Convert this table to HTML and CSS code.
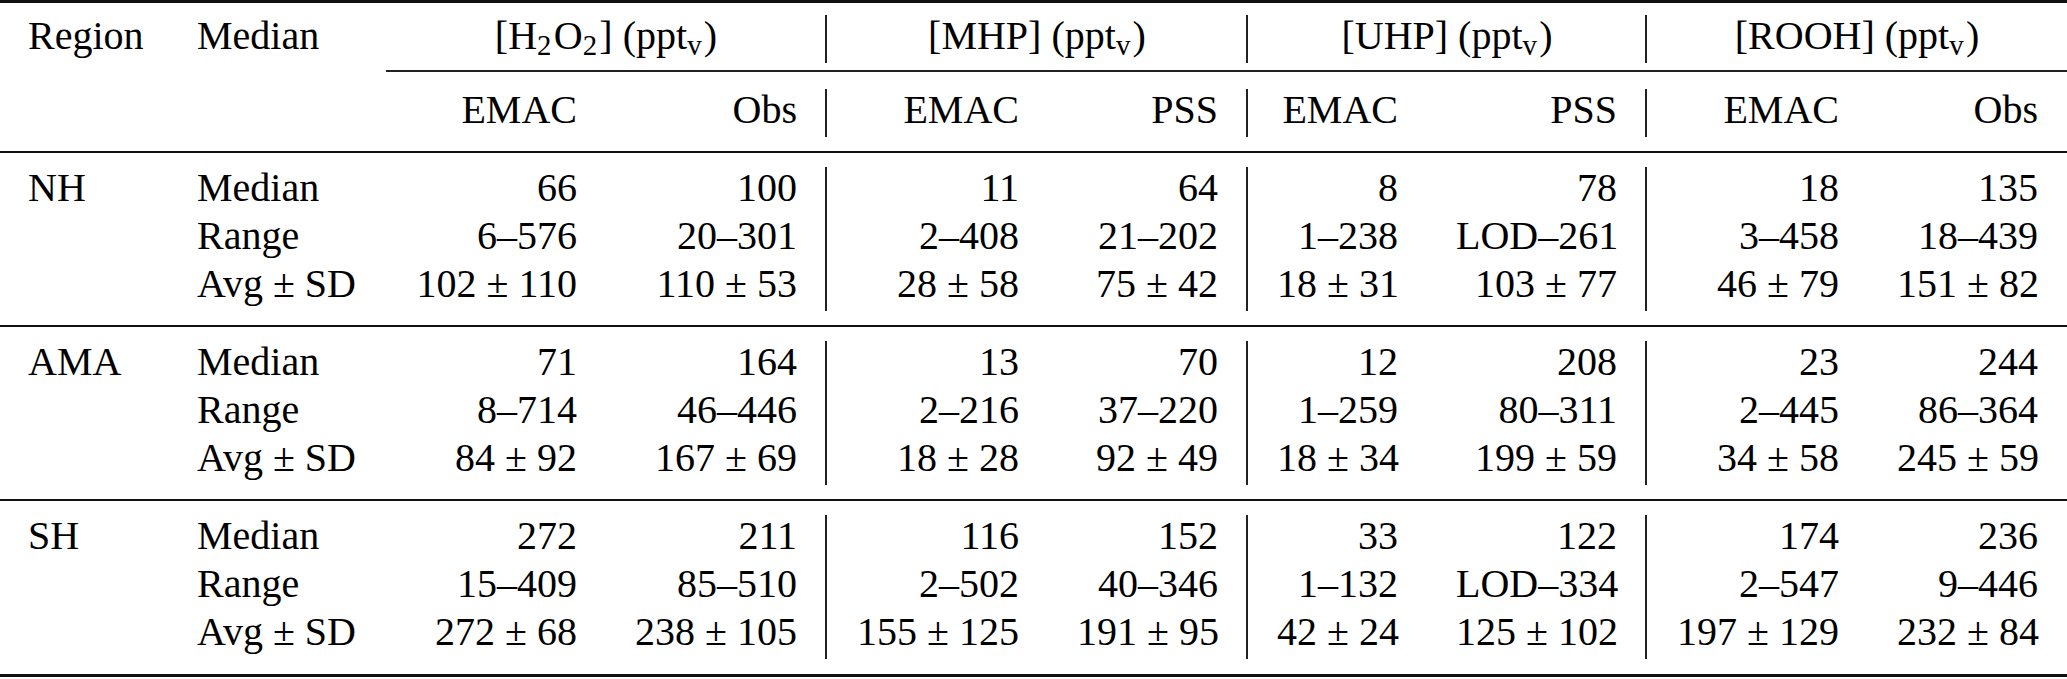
FILE: index.html
```html
<!DOCTYPE html>
<html lang="en">
<head>
<meta charset="UTF-8">
<title>Hydroperoxide medians by region</title>
<link rel="stylesheet" href="styles.css">
</head>
<body>
<div class="tbl">
    <!-- HEADER -->
    <div class="sect head-top">
        <div class="c l">Region</div>
        <div class="c l">Median</div>
        <div class="c ttl">[H<span class="sub">2</span>O<span class="sub">2</span>] (ppt<span class="sub">v</span>)</div>
        <div class="c ttl sep">[MHP] (ppt<span class="sub">v</span>)</div>
        <div class="c ttl sep">[UHP] (ppt<span class="sub">v</span>)</div>
        <div class="c ttl sep">[ROOH] (ppt<span class="sub">v</span>)</div>
        <div class="cmid"></div>
    </div>
    <div class="sect head-bottom">
        <div class="c"></div>
        <div class="c"></div>
        <div class="c">EMAC</div>
        <div class="c">Obs</div>
        <div class="c sep">EMAC</div>
        <div class="c">PSS</div>
        <div class="c sep">EMAC</div>
        <div class="c">PSS</div>
        <div class="c sep">EMAC</div>
        <div class="c">Obs</div>
    </div>

    <!-- NH -->
    <div class="sect group">
        <div class="c l">NH</div>
        <div class="c l">Median</div>
        <div class="c">66</div>
        <div class="c">100</div>
        <div class="c sep">11</div>
        <div class="c">64</div>
        <div class="c sep">8</div>
        <div class="c">78</div>
        <div class="c sep">18</div>
        <div class="c">135</div>

        <div class="c"></div>
        <div class="c l">Range</div>
        <div class="c">6–576</div>
        <div class="c">20–301</div>
        <div class="c sep">2–408</div>
        <div class="c">21–202</div>
        <div class="c sep">1–238</div>
        <div class="c">LOD–261</div>
        <div class="c sep">3–458</div>
        <div class="c">18–439</div>

        <div class="c"></div>
        <div class="c l">Avg ± SD</div>
        <div class="c">102 ± 110</div>
        <div class="c">110 ± 53</div>
        <div class="c sep">28 ± 58</div>
        <div class="c">75 ± 42</div>
        <div class="c sep">18 ± 31</div>
        <div class="c">103 ± 77</div>
        <div class="c sep">46 ± 79</div>
        <div class="c">151 ± 82</div>
    </div>

    <!-- AMA -->
    <div class="sect group">
        <div class="c l">AMA</div>
        <div class="c l">Median</div>
        <div class="c">71</div>
        <div class="c">164</div>
        <div class="c sep">13</div>
        <div class="c">70</div>
        <div class="c sep">12</div>
        <div class="c">208</div>
        <div class="c sep">23</div>
        <div class="c">244</div>

        <div class="c"></div>
        <div class="c l">Range</div>
        <div class="c">8–714</div>
        <div class="c">46–446</div>
        <div class="c sep">2–216</div>
        <div class="c">37–220</div>
        <div class="c sep">1–259</div>
        <div class="c">80–311</div>
        <div class="c sep">2–445</div>
        <div class="c">86–364</div>

        <div class="c"></div>
        <div class="c l">Avg ± SD</div>
        <div class="c">84 ± 92</div>
        <div class="c">167 ± 69</div>
        <div class="c sep">18 ± 28</div>
        <div class="c">92 ± 49</div>
        <div class="c sep">18 ± 34</div>
        <div class="c">199 ± 59</div>
        <div class="c sep">34 ± 58</div>
        <div class="c">245 ± 59</div>
    </div>

    <!-- SH -->
    <div class="sect group last">
        <div class="c l">SH</div>
        <div class="c l">Median</div>
        <div class="c">272</div>
        <div class="c">211</div>
        <div class="c sep">116</div>
        <div class="c">152</div>
        <div class="c sep">33</div>
        <div class="c">122</div>
        <div class="c sep">174</div>
        <div class="c">236</div>

        <div class="c"></div>
        <div class="c l">Range</div>
        <div class="c">15–409</div>
        <div class="c">85–510</div>
        <div class="c sep">2–502</div>
        <div class="c">40–346</div>
        <div class="c sep">1–132</div>
        <div class="c">LOD–334</div>
        <div class="c sep">2–547</div>
        <div class="c">9–446</div>

        <div class="c"></div>
        <div class="c l">Avg ± SD</div>
        <div class="c">272 ± 68</div>
        <div class="c">238 ± 105</div>
        <div class="c sep">155 ± 125</div>
        <div class="c">191 ± 95</div>
        <div class="c sep">42 ± 24</div>
        <div class="c">125 ± 102</div>
        <div class="c sep">197 ± 129</div>
        <div class="c">232 ± 84</div>
    </div>
</div>
</body>
</html>
```

FILE: styles.css
```css
* {
    margin: 0;
    padding: 0;
    box-sizing: border-box;
}

body {
    font-family: "Liberation Serif", "Times New Roman", serif;
    font-size: 40px;
    color: #000;
    background: #fff;
}

.tbl {
    width: 2067px;
    border-top: 3px solid #111;
}

/* every section shares the same column widths */
.sect {
    display: grid;
    grid-template-columns: 169px 217px 220px 220px 222px 199px 180px 219px 222px 199px;
}

/* CELLS */
.c {
    height: 48px;
    line-height: 41px;
    padding: 0 29px 7px;
    text-align: right;
    white-space: nowrap;
}

.c.l {
    text-align: left;
    padding-left: 28px;
}

.sep {
    border-left: 2px solid #222;
    margin-left: -1px;
}

.ttl {
    grid-column: span 2;
    text-align: center;
}

.sub {
    font-size: 0.72em;
    vertical-align: -0.22em;
    line-height: 0;
    margin-right: 0.08em;
}

/* HEADER */
.head-top {
    padding-top: 12px;
    row-gap: 7px;
}

.cmid {
    grid-column: 3 / -1;
    height: 2px;
    background: #222;
}

.head-bottom {
    padding: 17px 0 14px;
    border-bottom: 2px solid #111;
}

/* BODY GROUPS */
.group {
    padding: 14px 0 14px;
    border-bottom: 2px solid #111;
}

.group.last {
    padding-bottom: 15px;
    border-bottom-width: 3px;
}
```
